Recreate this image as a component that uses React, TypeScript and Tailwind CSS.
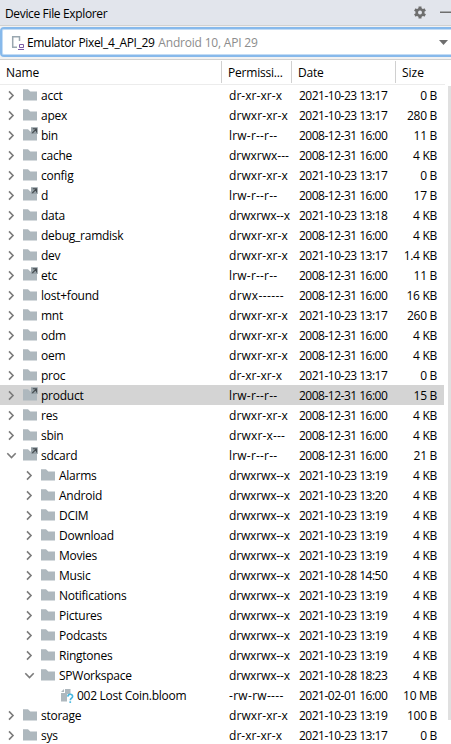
const DATE_A = '2021-10-23 13:17';
const DATE_B = '2008-12-31 16:00';
const DATE_C = '2021-10-23 13:19';

type Kind = 'folder' | 'link' | 'file';
type Row = [name: string, perm: string, date: string, size: string, kind?: Kind, depth?: number, open?: boolean];

const rows: Row[] = [
  ['acct', 'dr-xr-xr-x', DATE_A, '0 B'],
  ['apex', 'drwxr-xr-x', DATE_A, '280 B'],
  ['bin', 'lrw-r--r--', DATE_B, '11 B', 'link'],
  ['cache', 'drwxrwx---', DATE_B, '4 KB'],
  ['config', 'drwxr-xr-x', DATE_A, '0 B'],
  ['d', 'lrw-r--r--', DATE_B, '17 B', 'link'],
  ['data', 'drwxrwx--x', '2021-10-23 13:18', '4 KB'],
  ['debug_ramdisk', 'drwxr-xr-x', DATE_B, '4 KB'],
  ['dev', 'drwxr-xr-x', DATE_A, '1.4 KB'],
  ['etc', 'lrw-r--r--', DATE_B, '11 B', 'link'],
  ['lost+found', 'drwx------', DATE_B, '16 KB'],
  ['mnt', 'drwxr-xr-x', DATE_A, '260 B'],
  ['odm', 'drwxr-xr-x', DATE_B, '4 KB'],
  ['oem', 'drwxr-xr-x', DATE_B, '4 KB'],
  ['proc', 'dr-xr-xr-x', DATE_A, '0 B'],
  ['product', 'lrw-r--r--', DATE_B, '15 B', 'link'],
  ['res', 'drwxr-xr-x', DATE_B, '4 KB'],
  ['sbin', 'drwxr-x---', DATE_B, '4 KB'],
  ['sdcard', 'lrw-r--r--', DATE_B, '21 B', 'link', 0, true],
  ['Alarms', 'drwxrwx--x', DATE_C, '4 KB', 'folder', 1],
  ['Android', 'drwxrwx--x', '2021-10-23 13:20', '4 KB', 'folder', 1],
  ['DCIM', 'drwxrwx--x', DATE_C, '4 KB', 'folder', 1],
  ['Download', 'drwxrwx--x', DATE_C, '4 KB', 'folder', 1],
  ['Movies', 'drwxrwx--x', DATE_C, '4 KB', 'folder', 1],
  ['Music', 'drwxrwx--x', '2021-10-28 14:50', '4 KB', 'folder', 1],
  ['Notifications', 'drwxrwx--x', DATE_C, '4 KB', 'folder', 1],
  ['Pictures', 'drwxrwx--x', DATE_C, '4 KB', 'folder', 1],
  ['Podcasts', 'drwxrwx--x', DATE_C, '4 KB', 'folder', 1],
  ['Ringtones', 'drwxrwx--x', DATE_C, '4 KB', 'folder', 1],
  ['SPWorkspace', 'drwxrwx--x', '2021-10-28 18:23', '4 KB', 'folder', 1, true],
  ['002 Lost Coin.bloom', '-rw-rw----', '2021-02-01 16:00', '10 MB', 'file', 2],
  ['storage', 'drwxr-xr-x', DATE_C, '100 B'],
  ['sys', 'dr-xr-xr-x', DATE_A, '0 B'],
];

const permTracking: Record<string, string> = {
  'lrw-r--r--': 'tracking-[0.2px]',
  'drwx------': 'tracking-[0.4px]',
  '-rw-rw----': 'tracking-[0.3px]',
  'drwxr-x---': 'tracking-[0.15px]',
  'dr-xr-xr-x': 'tracking-[0.05px]',
  'drwxr-xr-x': 'tracking-[0.1px]',
  'drwxrwx---': 'tracking-[0px]',
  'drwxrwx--x': 'tracking-[-0.15px]',
};

function Chevron({ open }: { open?: boolean }) {
  return (
    <svg className="h-5 w-[22px] shrink-0" viewBox="0 0 22 20" fill="none" stroke="#7b7b7b" strokeWidth="1.6">
      <path d={open ? 'M7.3 8.3 11.5 12.5 15.7 8.3' : 'M9 6.4 13 10.5 9 14.6'} />
    </svg>
  );
}

function NodeIcon({ kind }: { kind: Kind }) {
  if (kind === 'file') {
    return (
      <svg className="h-5 w-4 shrink-0" viewBox="0 0 16 20">
        <path d="M6 4h5.5v5H8v7.5H2V8h4z" fill="#aeb8be" />
        <path d="M5 4v3H2z" fill="#aeb8be" />
        <path d="M8.8 11.6c.2-3.2 5-3 4.8 0 0 1.6-2.3 1.7-2.3 3.6" fill="none" stroke="#45b6df" strokeWidth="1.6" />
        <path d="M10.4 16.3h1.7v1.6h-1.7z" fill="#45b6df" />
      </svg>
    );
  }
  return (
    <svg className="h-5 w-4 shrink-0" viewBox="0 0 16 20">
      <path d="M1 4.3h5l2.3 2.2H15v9H1z" fill="#aeb8be" />
      {kind === 'link' && (
        <>
          <path d="M9 2.2h6.8V9H9z" fill="#98a3a9" />
          <path d="M10.8 3.8h3.7v3.7M14.3 4 10.3 8" fill="none" stroke="#454c50" strokeWidth="1.1" />
        </>
      )}
    </svg>
  );
}

function FileRow({ row }: { row: Row }) {
  const [name, perm, date, size, kind = 'folder', depth = 0, open] = row;
  const indent = depth === 0 ? '' : depth === 1 ? 'pl-[18px]' : 'pl-[37px]';
  return (
    <div className={`flex h-5 items-center ${name === 'product' ? 'bg-[#d4d4d4]' : ''}`}>
      <div className={`flex w-[229px] items-center ${indent}`}>
        {kind === 'file' ? <span className="w-[22px]" /> : <Chevron open={open} />}
        <NodeIcon kind={kind} />
        <span className={`pt-0.5 ${kind === 'file' ? 'ml-0.5 tracking-[-0.28px]' : 'ml-[3px] tracking-[-0.25px]'}`}>{name}</span>
      </div>
      <span className={`w-[70px] pt-0.5 ${permTracking[perm]}`}>{perm}</span>
      <span className="w-[91px] pt-0.5 tracking-[-0.5px]">{date}</span>
      <span className="w-[47px] pt-0.5 text-right tracking-[-0.3px]">{size}</span>
    </div>
  );
}

export default function App() {
  return (
    <div className="h-[744px] w-[451px] overflow-hidden whitespace-pre bg-white font-['Open_Sans','Noto_Sans',sans-serif] text-[12px] leading-5 text-black">
      <header className="flex h-[26px] items-center border-b border-[#d1d1d1] bg-[#e2e5ec] pl-[5px]">
        <span className="flex-1 pt-0.5 tracking-[-0.35px]">Device File Explorer</span>
        <svg className="h-[26px] w-10" viewBox="0 0 40 26">
          <g transform="translate(9 12.5)" fill="#6e6e6e">
            <path d="M-1.5-6h3v12h-3z" />
            <path d="M-1.5-6h3v12h-3z" transform="rotate(60)" />
            <path d="M-1.5-6h3v12h-3z" transform="rotate(120)" />
            <circle r="4.5" />
            <circle r="2" fill="#e2e5ec" />
          </g>
          <path d="M29 11.5h11v1.5H29z" fill="#6e6e6e" />
        </svg>
      </header>
      <div className="h-[34px] border-b border-[#d1d1d1] bg-[#f2f2f2] pt-px">
        <div className="flex h-[30px] w-[460px] items-center rounded-[4px] border-2 border-[#87b9eb] bg-white pl-[9px] inset-ring inset-ring-[#c3dcf5]">
          <svg className="h-4 w-4" viewBox="0 0 16 16" fill="none">
            <path d="M1 2.7h7.5v4.3M1.7 2v11M1 13.3h5" stroke="#9aa7b0" strokeWidth="1.5" />
            <path d="M8.5 10.5h4v3h-4zM7 15.5h6" stroke="#7d5ca6" />
          </svg>
          <span className="pt-0.5 tracking-[-0.33px]">Emulator Pixel_4_API_29 </span>
          <span className="ml-px flex-1 pt-0.5 tracking-[-0.2px] text-[#8c8c8c]">Android 10, API 29</span>
          <svg className="mr-[8px] h-5 w-3" viewBox="0 0 12 20"><path d="M1 8h9l-4.5 5z" fill="#6e6e6e" /></svg>
        </div>
      </div>
      <div className="flex h-[25px] w-[445px] items-center border-b border-[#ececec]">
        <span className="flex h-[22px] w-[222px] items-center border-r border-[#d0d0d0] pl-1.5 pt-0.5 tracking-[-0.1px]">Name</span>
        <span className="flex h-[22px] w-[70px] items-center border-r border-[#d0d0d0] pl-1.5 pt-0.5 tracking-[-0.2px]">Permissi...</span>
        <span className="flex h-[22px] w-[104px] items-center border-r border-[#d0d0d0] pl-1.5 pt-0.5 tracking-[-0.2px]">Date</span>
        <span className="flex h-[22px] items-center pl-1.5 pt-0.5">Size</span>
      </div>
      <div className="flex">
        <div className="w-[444px]">
          {rows.map((row) => <FileRow key={row[0]} row={row} />)}
        </div>
        <div className="ml-1 mt-px h-[634px] w-[3px] bg-[#e0e0e0]" />
      </div>
    </div>
  );
}
